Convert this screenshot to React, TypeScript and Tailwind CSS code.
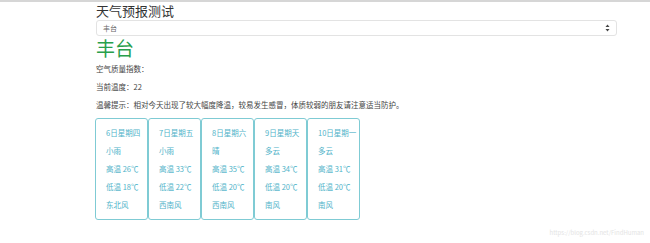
import React from "react";

const days = [
  { date: "6日星期四", weather: "小雨", high: "高温 26℃", low: "低温 18℃", wind: "东北风" },
  { date: "7日星期五", weather: "小雨", high: "高温 33℃", low: "低温 22℃", wind: "西南风" },
  { date: "8日星期六", weather: "晴", high: "高温 35℃", low: "低温 20℃", wind: "西南风" },
  { date: "9日星期天", weather: "多云", high: "高温 34℃", low: "低温 20℃", wind: "南风" },
  { date: "10日星期一", weather: "多云", high: "高温 31℃", low: "低温 20℃", wind: "南风" },
];

const font = { fontFamily: '"Noto Sans CJK SC", "Liberation Sans", sans-serif' };

function DayCard({ day }: { day: (typeof days)[number] }) {
  const rows = [day.date, day.weather, day.high, day.low, day.wind];
  return (
    <div className="w-[53px] h-[102px] border border-[#7fcbd4] rounded-[3px] flex flex-col justify-center pl-[10px]">
      {rows.map((r, i) => (
        <div key={i} className="h-[18px] flex items-center text-[7.5px] text-[#4fb3c9] whitespace-nowrap">
          {r}
        </div>
      ))}
    </div>
  );
}

export default function App() {
  return (
    <div className="relative w-[650px] h-[243px] bg-white overflow-hidden" style={font}>
      <div className="h-[2px] bg-[#d6d6d6]" />
      <div className="ml-[96px] w-[521px] flex flex-col">
        {/* title */}
        <div className="h-[18px] flex items-center text-[13px] text-[#333]">天气预报测试</div>

        {/* city select */}
        <div className="h-[16px] border border-[#e3e3e3] rounded-[3px] flex items-center justify-between px-[6px]">
          <span className="text-[7px] text-[#666]">丰台</span>
          <svg width="5" height="8" viewBox="0 0 5 8">
            <path d="M0.5 3 L2.5 0.5 L4.5 3 Z" fill="#444" />
            <path d="M0.5 5 L2.5 7.5 L4.5 5 Z" fill="#444" />
          </svg>
        </div>

        <div className="h-[24px] flex items-center text-[19px] text-[#28a04c]">丰台</div>

        <div className="h-[18px] flex items-center text-[7.5px] text-[#444]">空气质量指数：</div>
        <div className="h-[18px] flex items-center text-[7.5px] text-[#444]">当前温度：22</div>
        <div className="h-[18px] flex items-center text-[7.5px] text-[#444] whitespace-nowrap">
          温馨提示：相对今天出现了较大幅度降温，较易发生感冒，体质较弱的朋友请注意适当防护。
        </div>

        {/* forecast cards */}
        <div className="mt-[4px] -ml-px flex">
          {days.map((d) => (
            <DayCard key={d.date} day={d} />
          ))}
        </div>
      </div>

      <div className="absolute right-[6px] bottom-[6px] text-[6px] text-[#e4e4e4]">
        https://blog.csdn.net/FindHuman
      </div>
    </div>
  );
}
